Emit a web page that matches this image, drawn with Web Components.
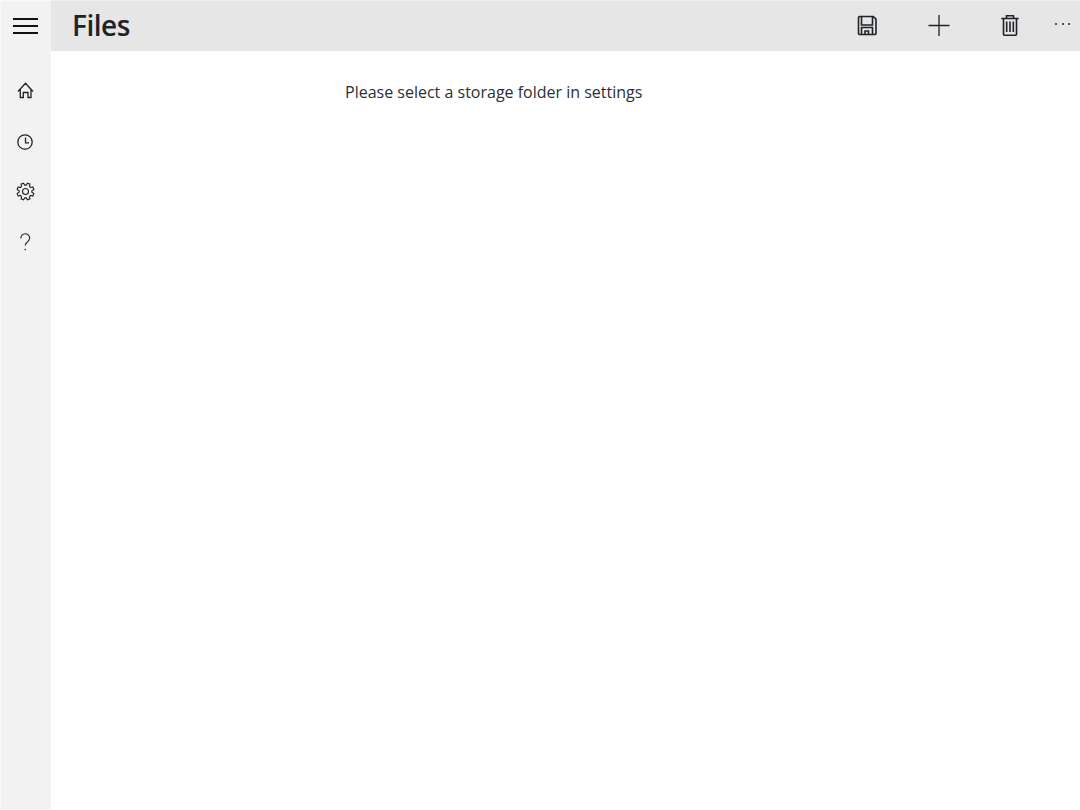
<!DOCTYPE html>
<html>
<head>
<meta charset="utf-8">
<title>Files</title>
<style>
    html, body { margin: 0; height: 100%; background: #fff; }
    body { font-family: "Open Sans", "Noto Sans", sans-serif; color: #1f2328; overflow: hidden; }
</style>
</head>
<body>
<files-app>
    <nav-rail slot="rail">
        <rail-button icon="home" top="27"></rail-button>
        <rail-button icon="clock" top="28"></rail-button>
        <rail-button icon="gear" top="25"></rail-button>
        <rail-button icon="help" top="27"></rail-button>
    </nav-rail>
    <top-bar slot="bar" title="Files">
        <bar-button icon="save"></bar-button>
        <bar-button icon="plus"></bar-button>
        <bar-button icon="trash"></bar-button>
    </top-bar>
    <empty-note>Please select a storage folder in settings</empty-note>
</files-app>

<script>
// gear outline is generated so the teeth stay even
function gearPath() {
    let d = "";
    for (let i = 0; i < 8; i++) {
        const a = i * Math.PI / 4 - Math.PI / 8;
        const pts = [[-.27, 6.4], [-.16, 8.6], [.16, 8.6], [.27, 6.4]];
        pts.forEach((p, j) => {
            const x = 9.5 + p[1] * Math.cos(a + p[0]);
            const y = 9.5 + p[1] * Math.sin(a + p[0]);
            d += (i === 0 && j === 0 ? "M" : "L") + x.toFixed(2) + " " + y.toFixed(2);
        });
    }
    return `<path d="${d}Z"/><circle cx="9.5" cy="9.5" r="3"/>`;
}

const ICONS = {
    home: `<path d="M2 10.500 9.500 2.300 17 10.500M4.300 8.500V16.500H7.300V11.500H12V16.500H15V8.500"/>`,
    clock: `<circle cx="9" cy="9" r="7.200"/><path d="M9.500 4.500V9.800H13"/>`,
    gear: gearPath(),
    help: `<path d="M4.800 5.500C4.800 3 6.700 .8 9.200 .8s4.500 2 4.500 4.300c0 2.100-1.200 3.100-2.500 4.100-1.300 1-2 1.800-2 3.400"/><circle cx="9.200" cy="16.500" r=".8" fill="currentColor" stroke="none"/>`,
    save: `<path d="M3.700 1.500H17.300L20 4.200V18.300A1.200 1.200 0 0 1 18.800 19.500H3.700A1.200 1.200 0 0 1 2.500 18.300V2.700A1.200 1.200 0 0 1 3.700 1.500ZM5.500 1.500V10H16.500V1.500M5.500 19.500V12.500H16.500V19.500M9 19.500V16H12.500V19.500"/>`,
    plus: `<path d="M11 0V21M.5 10.500H21.500" stroke-width="1.300"/>`,
    trash: `<path d="M2.300 3.500H19.700M7.500 3.500V.8H14.500V3.500M4.500 3.500V19.300A1 1 0 0 0 5.500 20.300H16.500A1 1 0 0 0 17.500 19.300V3.500M7.700 6.500V17M11 6.500V17M14.300 6.500V17"/>`
};

class RailButton extends HTMLElement {
    constructor() {
        super();
        this.attachShadow({ mode: "open" });
    }
    connectedCallback() {
        const icon = this.getAttribute("icon");
        const stroke = icon === "help" || icon === "gear" ? 1.1 : 1.3;
        this.shadowRoot.innerHTML = `
            <style>
                :host { display: flex; justify-content: center; align-items: center; height: 24px; padding-right: 1px; margin-top: ${this.getAttribute("top")}px; color: #1f2328; }
                svg { width: 18px; height: 18px; fill: none; stroke: currentColor; stroke-width: ${stroke}; overflow: visible; }
            </style>
            <svg viewBox="0 0 18 18">${ICONS[icon]}</svg>
        `;
    }
}

class NavRail extends HTMLElement {
    constructor() {
        super();
        this.attachShadow({ mode: "open" });
    }
    connectedCallback() {
        this.shadowRoot.innerHTML = `
            <style>
                :host { display: flex; flex-direction: column; width: 51px; height: 100%; background: #f2f2f2; flex: none; box-shadow: inset 1px 1px 0 #f8f8f8, inset 0 -1px 0 #f8f8f8; }
                .burger { display: flex; flex-direction: column; gap: 5px; align-items: center; height: 51px; box-sizing: border-box; padding: 18px 1px 0 0; }
                .burger i { display: block; width: 25px; height: 2px; background: #111; }
            </style>
            <div class="burger"><i></i><i></i><i></i></div>
            <slot></slot>
        `;
    }
}

class BarButton extends HTMLElement {
    constructor() {
        super();
        this.attachShadow({ mode: "open" });
    }
    connectedCallback() {
        this.shadowRoot.innerHTML = `
            <style>
                :host { display: flex; justify-content: center; align-items: center; width: 71.5px; height: 100%; color: #1f2328; }
                svg { width: 22px; height: 21px; fill: none; stroke: currentColor; stroke-width: 1.6; overflow: visible; }
            </style>
            <svg viewBox="0 0 22 21">${ICONS[this.getAttribute("icon")]}</svg>
        `;
    }
}

class TopBar extends HTMLElement {
    constructor() {
        super();
        this.attachShadow({ mode: "open" });
    }
    connectedCallback() {
        this.shadowRoot.innerHTML = `
            <style>
                :host { display: flex; align-items: center; height: 51px; background: #e6e6e6; padding-left: 21px; box-shadow: inset 0 1px 0 #f0f0f0; }
                h1 { margin: -2px 0 0; flex: 1; font-size: 28px; font-weight: 600; letter-spacing: -.5px; color: #1f2328; }
                .more { display: flex; gap: 4.5px; margin: -3px 10px 0 9.25px; }
                .more i { width: 2px; height: 2px; border-radius: 50%; background: #222; }
                .actions { display: flex; height: 100%; }
            </style>
            <h1>${this.getAttribute("title")}</h1>
            <div class="actions"><slot></slot></div>
            <div class="more"><i></i><i></i><i></i></div>
        `;
    }
}

class EmptyNote extends HTMLElement {
    constructor() {
        super();
        this.attachShadow({ mode: "open" });
    }
    connectedCallback() {
        this.shadowRoot.innerHTML = `
            <style>
                :host { display: block; padding: 29px 0 0 294px; font-size: 16px; line-height: 24px; color: #2b2f36; }
            </style>
            <slot></slot>
        `;
    }
}

class FilesApp extends HTMLElement {
    constructor() {
        super();
        this.attachShadow({ mode: "open" });
    }
    connectedCallback() {
        this.shadowRoot.innerHTML = `
            <style>
                :host { display: flex; height: 100vh; }
                main { flex: 1; min-width: 0; }
            </style>
            <slot name="rail"></slot>
            <main>
                <slot name="bar"></slot>
                <slot></slot>
            </main>
        `;
    }
}

customElements.define("rail-button", RailButton);
customElements.define("nav-rail", NavRail);
customElements.define("bar-button", BarButton);
customElements.define("top-bar", TopBar);
customElements.define("empty-note", EmptyNote);
customElements.define("files-app", FilesApp);
</script>
</body>
</html>
